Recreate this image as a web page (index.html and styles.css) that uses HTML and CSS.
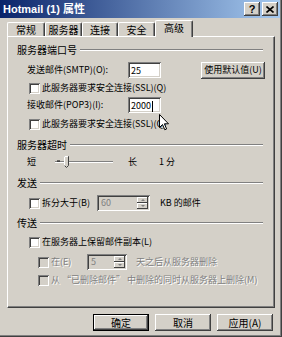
FILE: index.html
```html
<!DOCTYPE html>
<html lang="zh-CN">
<head>
    <meta charset="UTF-8">
    <title>Hotmail (1) 属性</title>
    <link rel="stylesheet" href="styles.css">
</head>
<body>
    <div class="window">
        <div class="titlebar">
            <span class="title">Hotmail (1) 属性</span>
            <div class="caption">
                <span class="cap-btn">?</span>
                <span class="cap-btn">
                    <svg width="8" height="7" viewBox="0 0 8 7"><path d="M0.5 0.5 L7.5 6.5 M7.5 0.5 L0.5 6.5" stroke="#000" stroke-width="1.6"/></svg>
                </span>
            </div>
        </div>

        <div class="tabs">
            <span class="tab w38">常规</span>
            <span class="tab w37">服务器</span>
            <span class="tab w36">连接</span>
            <span class="tab w37">安全</span>
            <span class="tab active">高级</span>
        </div>

        <div class="panel">
            <div class="group g-first"><span>服务器端口号</span><i class="rule"></i></div>
            <div class="row r-smtp">
                <span class="lbl">发送邮件(SMTP)(O):</span>
                <span class="field">25</span>
                <span class="btn btn-reset">使用默认值(U)</span>
            </div>
            <div class="row chk-row r-ssl1"><i class="chk"></i><span>此服务器要求安全连接(SSL)(Q)</span></div>
            <div class="row r-pop">
                <span class="lbl">接收邮件(POP3)(I):</span>
                <span class="field">2000<i class="caret"></i></span>
            </div>
            <div class="row chk-row r-ssl2"><i class="chk"></i><span>此服务器要求安全连接(SSL)(Q)</span></div>

            <div class="group g-timeout"><span>服务器超时</span><i class="rule"></i></div>
            <div class="row r-slider">
                <span>短</span>
                <svg class="slider" width="60" height="18" viewBox="0 0 60 18">
                    <line x1="0" y1="8.5" x2="58" y2="8.5" stroke="#808080"/>
                    <line x1="0" y1="9.5" x2="58" y2="9.5" stroke="#fff"/>
                    <line x1="2" y1="8" x2="5" y2="8" stroke="#000"/>
                    <path d="M9.5 3.5 H13.5 V12.5 L11.5 14.5 L9.5 12.5 Z" fill="#d4d0c8" stroke="#404040"/>
                    <path d="M9.5 12.5 V3.5 H13" fill="none" stroke="#fff"/>
                </svg>
                <span class="long">长</span>
                <span class="minutes">1 分</span>
            </div>

            <div class="group g-send"><span>发送</span><i class="rule"></i></div>
            <div class="row chk-row r-split">
                <i class="chk"></i><span class="split-lbl">拆分大于(B)</span>
                <span class="spin w-split"><span class="spin-val">60</span><span class="spin-btns"><b class="up"></b><b class="down"></b></span></span>
                <span class="unit">KB 的邮件</span>
            </div>

            <div class="group g-deliver"><span>传送</span><i class="rule"></i></div>
            <div class="row chk-row r-keep"><i class="chk"></i><span>在服务器上保留邮件副本(L)</span></div>
            <div class="row chk-row sub r-days">
                <i class="chk off"></i><span class="dim days-lbl">在(E)</span>
                <span class="spin w-days"><span class="spin-val">5</span><span class="spin-btns"><b class="up"></b><b class="down"></b></span></span>
                <span class="dim after">天之后从服务器删除</span>
            </div>
            <div class="row chk-row sub r-del"><i class="chk off"></i><span class="dim">从 “已删除邮件” 中删除的同时从服务器上删除(M)</span></div>
        </div>

        <div class="actions">
            <span class="btn act default">确定</span>
            <span class="btn act">取消</span>
            <span class="btn act">应用(A)</span>
        </div>

        <svg class="pointer" width="11" height="17" viewBox="0 0 11 17">
            <path d="M0.5 0.5 V13.5 L3.5 10.5 L5.8 15.8 L7.6 15 L5.4 9.8 H9.5 Z" fill="#fff" stroke="#000"/>
        </svg>
    </div>
</body>
</html>
```

FILE: styles.css
```css
body {
    margin: 0;
    background: #d4d0c8;
    font-family: "Noto Sans CJK SC", sans-serif;
    font-size: 9px;
    line-height: 12px;
    color: #000;
}

.window {
    position: relative;
    width: 282px;
    height: 337px;
    box-sizing: border-box;
    background: #d4d0c8;
    border-right: 1px solid #404040;
    border-bottom: 1px solid #404040;
    box-shadow: inset -1px -1px #808080;
    display: flex;
    flex-direction: column;
    white-space: nowrap;
}

/* title bar */
.titlebar {
    height: 18px;
    margin-right: 1px;
    padding: 0 2px 0 3px;
    background: linear-gradient(to right, #0a246a, #a6caf0);
    display: flex;
    align-items: center;
    justify-content: space-between;
}
.title {
    color: #fff;
    font-family: "Liberation Sans", "Noto Sans CJK SC", sans-serif;
    font-weight: bold;
    font-size: 11px;
}
.caption {
    display: flex;
    gap: 2px;
}
.cap-btn {
    width: 16px;
    height: 14px;
    box-sizing: border-box;
    background: #d4d0c8;
    box-shadow: inset -1px -1px #404040, inset 1px 1px #fff, inset -2px -2px #808080;
    display: flex;
    align-items: center;
    justify-content: center;
    font-family: "Liberation Sans", sans-serif;
    font-weight: bold;
    font-size: 11px;
}

/* tabs */
.tabs {
    height: 18px;
    padding-left: 7px;
    display: flex;
    align-items: flex-end;
    font-size: 10px;
}
.tab {
    height: 14px;
    box-sizing: border-box;
    border-top: 1px solid #fff;
    border-left: 1px solid #fff;
    border-right: 1px solid #404040;
    border-radius: 2px 2px 0 0;
    box-shadow: inset -1px 0 #808080;
    display: flex;
    align-items: center;
    justify-content: center;
}
.w36 { width: 36px; }
.w37 { width: 37px; }
.w38 { width: 38px; }
.tab.active {
    position: relative;
    z-index: 1;
    width: 38px;
    height: 17px;
    margin-bottom: -1px;
    background: #d4d0c8;
    padding-bottom: 2px;
}

/* panel */
.panel {
    width: 268px;
    height: 272px;
    margin-left: 7px;
    box-sizing: border-box;
    border-top: 1px solid #fff;
    border-left: 1px solid #fff;
    border-right: 1px solid #404040;
    border-bottom: 1px solid #404040;
    box-shadow: inset -1px -1px #808080;
    padding-top: 6px;
}

.group {
    height: 14px;
    padding-left: 9px;
    display: flex;
    align-items: center;
    font-size: 10px;
}
.rule {
    flex: 1;
    height: 0;
    margin: 0 11px 0 3px;
    border-top: 1px solid #808080;
    border-bottom: 1px solid #fff;
}

.row {
    display: flex;
    align-items: center;
    padding-left: 19px;
    height: 16px;
}
.chk-row { padding-left: 21px; }
.chk-row.sub { padding-left: 30px; }

.chk {
    width: 11px;
    height: 11px;
    margin-right: 2px;
    flex: none;
    background: #fff;
    box-shadow: inset 1px 1px #808080, inset -1px -1px #fff, inset 2px 2px #404040, inset -2px -2px #d4d0c8;
}
.chk.off { background: #d4d0c8; }

.dim {
    color: #808080;
    text-shadow: 1px 1px #fff;
}

.lbl { width: 101px; }

.field {
    width: 33px;
    height: 16px;
    box-sizing: border-box;
    padding: 2px 0 0 3px;
    background: #fff;
    box-shadow: inset 1px 1px #808080, inset -1px -1px #fff, inset 2px 2px #404040, inset -2px -2px #d4d0c8;
    display: flex;
    align-items: center;
}
.caret {
    width: 1px;
    height: 11px;
    margin-left: 1px;
    background: #000;
}

.btn {
    box-sizing: border-box;
    background: #d4d0c8;
    box-shadow: inset -1px -1px #404040, inset 1px 1px #fff, inset -2px -2px #808080;
    display: flex;
    align-items: center;
    justify-content: center;
}
.btn-reset {
    width: 64px;
    height: 17px;
    margin-left: 40px;
}

/* vertical rhythm */
.r-smtp { margin-top: 4px; height: 18px; }
.r-ssl1 { margin-top: 1px; }
.r-pop { margin-top: 1px; }
.r-ssl2 { margin-top: 3px; }
.g-timeout { margin-top: 6px; }
.r-slider { margin-top: 1px; height: 18px; }
.g-send { margin-top: 5px; }
.r-split { margin-top: 4px; height: 18px; }
.g-deliver { margin-top: 4px; }
.r-keep { margin-top: 4px; }
.r-days { margin-top: 3px; height: 18px; }
.r-del { margin-top: 1px; }

/* slider */
.slider { margin-left: 19px; }
.long { margin-left: 13px; }
.minutes { margin-left: 22px; }

/* spin boxes */
.split-lbl { width: 55px; }
.days-lbl { width: 36px; }
.spin {
    height: 16px;
    box-sizing: border-box;
    padding: 2px;
    display: flex;
    box-shadow: inset 1px 1px #808080, inset -1px -1px #fff, inset 2px 2px #404040, inset -2px -2px #d4d0c8;
}
.w-split { width: 53px; }
.w-days { width: 40px; }
.spin-val {
    flex: 1;
    padding-left: 2px;
    color: #808080;
    line-height: 12px;
}
.spin-btns {
    width: 11px;
    display: flex;
    flex-direction: column;
}
.spin-btns b {
    flex: 1;
    box-shadow: inset -1px -1px #404040, inset 1px 1px #fff;
    display: flex;
    align-items: center;
    justify-content: center;
}
.spin-btns b::after {
    content: "";
    border-left: 2px solid transparent;
    border-right: 2px solid transparent;
}
.spin-btns .up::after { border-bottom: 2px solid #808080; }
.spin-btns .down::after { border-top: 2px solid #808080; }
.unit { margin-left: 10px; }
.after { margin-left: 9px; }

/* dialog buttons */
.actions {
    display: flex;
    justify-content: flex-end;
    gap: 6px;
    padding: 6px 8px 0 0;
    font-size: 10px;
}
.act {
    width: 56px;
    height: 17px;
}
.act.default {
    border: 1px solid #000;
}

.pointer {
    position: absolute;
    left: 159px;
    top: 114px;
}
```
